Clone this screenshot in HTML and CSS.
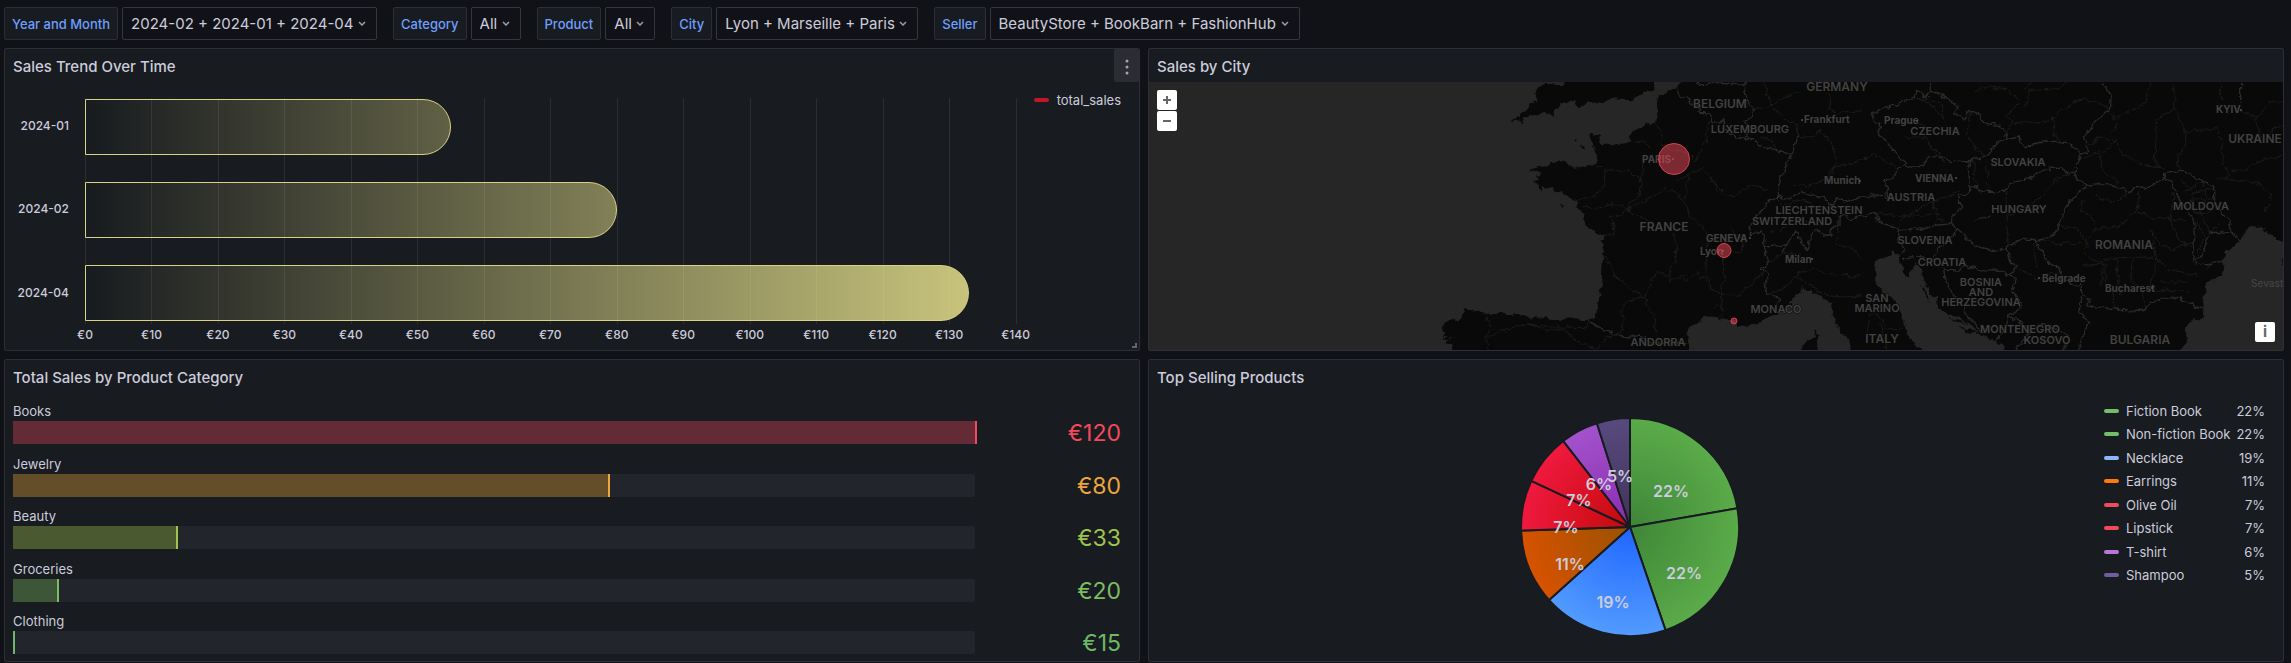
FILE: index.html
```
<!DOCTYPE html>
<html lang="en">
<head>
<meta charset="utf-8">
<title>Sales dashboard</title>
<link rel="stylesheet" href="styles.css">
</head>
<body>
<form class="filters">
  <div class="filter">
    <label class="filter-label" for="f-month">Year and Month</label>
    <span class="picker"><select id="f-month"><option>2024-02 + 2024-01 + 2024-04</option></select><svg class="chevron" viewBox="0 0 8 5"><path d="M1 1 4 4 7 1"/></svg></span>
  </div>
  <div class="filter">
    <label class="filter-label" for="f-category">Category</label>
    <span class="picker"><select id="f-category"><option>All</option></select><svg class="chevron" viewBox="0 0 8 5"><path d="M1 1 4 4 7 1"/></svg></span>
  </div>
  <div class="filter">
    <label class="filter-label" for="f-product">Product</label>
    <span class="picker"><select id="f-product"><option>All</option></select><svg class="chevron" viewBox="0 0 8 5"><path d="M1 1 4 4 7 1"/></svg></span>
  </div>
  <div class="filter">
    <label class="filter-label" for="f-city">City</label>
    <span class="picker"><select id="f-city"><option>Lyon + Marseille + Paris</option></select><svg class="chevron" viewBox="0 0 8 5"><path d="M1 1 4 4 7 1"/></svg></span>
  </div>
  <div class="filter">
    <label class="filter-label" for="f-seller">Seller</label>
    <span class="picker"><select id="f-seller"><option>BeautyStore + BookBarn + FashionHub</option></select><svg class="chevron" viewBox="0 0 8 5"><path d="M1 1 4 4 7 1"/></svg></span>
  </div>
</form>

<main class="dashboard">
  <section class="panel">
    <header class="panel-header">
      <h2>Sales Trend Over Time</h2>
      <button class="panel-menu" type="button" aria-label="Panel menu"><svg viewBox="0 0 4 16"><circle cx="2" cy="2" r="1.5"/><circle cx="2" cy="8" r="1.5"/><circle cx="2" cy="14" r="1.5"/></svg></button>
    </header>
    <div class="trend">
      <div class="trend-names"><span>2024-01</span><span>2024-02</span><span>2024-04</span></div>
      <div class="trend-plot">
        <div class="trend-grid"><i></i><i></i><i></i><i></i><i></i><i></i><i></i><i></i><i></i><i></i><i></i><i></i><i></i><i></i><i></i></div>
        <div class="trend-bars">
          <div class="trend-bar" style="--value: 55"></div>
          <div class="trend-bar" style="--value: 80"></div>
          <div class="trend-bar" style="--value: 133"></div>
        </div>
      </div>
      <div class="trend-legend"><span class="swatch red-dark"></span>total_sales</div>
      <div class="trend-axis"><span>€0</span><span>€10</span><span>€20</span><span>€30</span><span>€40</span><span>€50</span><span>€60</span><span>€70</span><span>€80</span><span>€90</span><span>€100</span><span>€110</span><span>€120</span><span>€130</span><span>€140</span></div>
    </div>
    <span class="resize-handle"></span>
  </section>

  <section class="panel">
    <header class="panel-header"><h2>Sales by City</h2></header>
    <div class="map">
      <svg class="map-canvas" viewBox="0 0 1134 268" preserveAspectRatio="xMinYMid slice">
        <defs>
          <filter id="rough" filterUnits="userSpaceOnUse" x="0" y="0" width="1134" height="268" color-interpolation-filters="sRGB">
            <feTurbulence type="fractalNoise" baseFrequency="0.14" numOctaves="3" seed="4"/>
            <feDisplacementMap in="SourceGraphic" scale="7" xChannelSelector="R" yChannelSelector="G"/>
          </filter>
        </defs>
        <g filter="url(#rough)">
        <g transform="translate(291 0) scale(.33333)">
          <g class="land">
            <path d="M738-20 712 16 690 26 668 34 656 44 654 60 655 92 652 106 640 120 620 128 596 136 575 150 566 168 575 178 560 186 530 190 508 186 486 184 478 172 480 156 462 158 446 154 450 172 458 182 456 194 464 204 466 222 470 240 462 252 446 250 430 254 414 256 404 258 394 252 386 246 378 238 368 236 362 242 350 240 340 242 328 246 318 250 304 252 292 256 274 262 278 272 298 270 304 276 288 280 296 288 300 294 278 296 290 304 298 314 304 326 308 314 322 316 338 322 350 328 366 334 378 342 392 348 404 352 414 360 418 374 410 378 424 388 434 396 428 408 438 422 446 436 458 446 476 452 492 460 488 474 476 474 490 490 484 500 492 512 488 540 486 580 484 600 478 640 472 680 464 702 450 716 430 714 410 710 392 706 376 712 368 718 340 712 310 708 286 706 270 706 246 698 220 696 190 696 160 696 130 694 112 686 90 684 76 682 64 694 66 704 60 708 40 712 20 720 8 732 4 744 16 748 8 762 22 762 14 774 30 772 22 786 38 786 34 830H755L745 780 742 758 752 738 775 720 800 700 822 704 840 708 855 712 880 712 893 728 915 734 940 730 960 722 980 708 1000 698 1030 686 1050 666 1066 636 1090 622 1112 628 1140 640 1170 664 1180 690 1184 716 1194 732 1198 752 1215 760 1228 780 1240 830H1451L1441 804 1411 770 1396 730 1381 690 1366 655 1336 635 1306 605 1302 590 1311 575 1300 545 1316 530 1346 520 1361 508 1376 518 1378 540 1388 565 1400 588 1412 575 1424 548 1436 548 1444 570 1454 600 1466 625 1488 650 1498 680 1526 696 1556 706 1586 722 1611 745 1631 762 1661 775 1681 790 1698 804 1710 830H2215L2221 804 2241 780 2238 740 2251 715 2286 708 2288 665 2296 630 2301 602 2326 592 2348 580 2352 555 2348 530 2356 510 2381 496 2396 480 2411 455 2421 440 2446 434 2481 436 2466 445 2491 458 2511 475 2560 480V-20Z"/>
            <path d="M305 8 340 10 370 8 384-20H644L640 22 618 30 600 42 570 52 545 50 520 48 495 58 480 66 464 58 450 60 435 66 420 74 400 60 380 58 360 66 345 80 338 102 325 98 312 92 290 94 270 96 255 110 245 124 235 116 214 116 226 106 240 102 254 90 266 76 280 64 290 50 284 30Z"/>
            <path d="M1126 740 1132 744 1132 770 1140 830H1076L1084 786 1104 774 1124 766ZM422 190 436 194 430 200ZM400 172 408 174 404 180ZM362 366 372 368 368 374ZM2522 534 2540 530V550L2526 546ZM1440 600 1455 640 1470 660 1458 628ZM1520 708 1560 716 1590 728 1560 724ZM1550 738 1590 742 1620 752 1590 752Z"/>
          </g>
          <path class="minor" d="M640 120 662 140 664 190 700 200 750 220 770 250M575 178 610 182 640 200M770 240 785 190 800 170 805 120M748 270 790 262 815 290 840 340M815 290 850 335 880 345 930 310 985 325M470 250 500 264 560 266 580 282 605 290 610 225M495 264 492 320 460 345 410 352M605 290 600 340 570 365 562 384M430 375 470 378 520 364 562 384 600 362 640 345 675 318 730 350M562 384 545 398 508 404 520 430 522 458 492 460M562 384 610 410 640 428M730 350 745 400 780 430 800 450 800 480M735 350 740 310 748 275 710 295M700 450 712 490 706 540 690 560 690 600 730 580 740 602 770 575 805 598M690 580 650 570 630 610 610 645 550 662 545 690 552 710 540 755M495 520 525 580 570 620 610 645 640 700 655 770 660 804M800 480 798 580 810 595 812 625 850 635 900 640 950 590 975 570M850 520 852 580 845 640 848 680 840 705M820 680 845 670M870 445 910 470 905 510 870 505M140 700 150 740 135 770 145 804M140 765 210 740 260 725 320 745 370 740 400 770 420 780 470 804M260 725 330 735 400 735 440 745 450 716M470 804 500 765 540 758M970 0 990 60 1030 110 1072 125 1072 160M940 80 985 75 1030 50 1075 30M1072 160 1110 165 1140 148 1175 180 1190 240 1170 290M1060 305 1100 312 1160 290 1180 255 1266 235M1165 30 1170 80 1200 95 1266 85M950 175 960 200M960 165 1000 180 1010 206M1010 350 1030 370 1080 355 1140 375M990 450 1040 440 1080 410 1140 430M985 540 1040 510 1080 520M985 635 1050 610 1060 580 1120 560 1180 580 1266 582M1060 580 1110 610 1160 640 1200 645 1266 642M1195 400 1195 490 1240 500 1266 530M1266 230 1300 218 1340 240 1376 260M1390 165 1460 165 1470 200 1500 215 1510 240M1430 45 1480 70 1515 115 1500 60 1430 45M1395 120 1460 130M1300 395 1370 400 1430 400 1500 395M1370 440 1400 400 1480 360 1560 330M1480 360 1490 400 1510 420M1590 90 1580 160 1620 210 1650 225M1600 30 1640 15 1700 20 1740 60 1700 100 1716 130 1690 165M1750 20 1780 0M1760 70 1770 25 1860 20 1880 0M1720 125 1840 115 1860 85 1930 50 2000 70 2020 110 2070 90 2120 60 2130 0M1840 100 1845 160 1860 180M1600 230 1610 320M1640 250 1645 320M1700 330 1704 490M1706 400 1800 350 1850 290 1900 270M1945 190 1980 165 2020 175 2050 220 2110 250 2170 262M1930 230 2000 205 2030 170M1980 220 1990 270 2030 290 2035 320M2200 0 2205 80 2150 110 2145 250 2175 262M2205 80 2235 150 2240 190 2215 220 2215 265M2235 150 2330 140 2345 180 2350 240 2370 280 2350 292 2325 290M2345 60 2340 0M2440 100 2470 180 2500 140 2532 130M2370 265 2410 265 2450 240 2532 220M2350 292 2450 300 2500 350 2470 390M2400 85 2450 110 2490 60 2532 60M1930 350 1920 385 1960 410 1975 440 1940 470 1935 520 1990 545 1985 610M1975 440 2040 430 2080 400 2090 385 2140 410 2200 410 2240 420M2090 385 2100 330M1960 340 2020 360 2060 340 2060 320M2130 440 2160 490 2200 500 2260 480M2150 530 2140 480M1990 535 2080 520 2150 530 2180 560 2270 580M2000 545 1995 600 2020 630 2020 680M2030 530 2040 640M2080 520 2075 600 2110 620 2110 685M2150 530 2130 620 2250 630M2160 600 2250 600M1930 550 2000 545M1740 560 1790 590 1850 570M1780 480 1790 560M1930 480 1850 485 1800 475M1860 430 1910 440 1930 470M2200 330 2190 410 2215 470 2260 500M2220 290 2260 330 2320 320M2260 330 2250 380 2300 400 2330 370M2230 330 2290 300 2300 350 2280 390 2310 450 2340 420M2270 410 2290 470 2270 520M2240 360 2320 350M1310 690 1340 740 1390 740M1280 760 1290 700 1310 690M1320 720 1340 804M1870 280 1850 300M2030 120 2010 160"/>
          <path class="border" d="M712 20 716 40 730 50 748 48 752 68 775 74 782 92 808 92 812 118 838 124 850 108 846 136 870 152 888 164 915 170 940 170 955 188 975 200 1010 206 1056 218M1072 160 1056 218 1034 260 1022 290 1014 345M920 0 912 30 925 60 940 80 938 104 918 120 930 140 915 170M770 0 800 8 830 2 870 6 915 10M1014 345 985 355 975 375 955 395 935 430 930 460 960 445 975 470 972 495 985 540 965 562 985 580 975 610 985 635 1020 648 1005 680M975 495 1010 492 1040 488 1030 510 1050 470 1068 448 1085 490 1105 500 1115 460 1130 440 1150 462 1172 462 1175 435 1200 430 1200 400 1235 412 1266 400M1014 345 1050 350 1080 328 1120 340 1150 350 1180 370 1190 345 1230 358 1266 345 1326 340 1341 355 1338 330 1346 315 1332 298 1371 275 1376 258 1396 240M1396 240 1396 252 1451 254 1466 218 1506 226 1536 238 1581 242 1596 232M1396 240 1366 215 1341 180 1314 150 1316 125 1294 98 1326 80 1366 70 1426 45 1426 28 1456 45 1471 30 1506 40 1536 60 1551 75 1546 95 1576 112 1584 85 1616 100 1641 125 1676 130 1696 150 1702 172M1469 0 1471 30M1702 172 1736 165 1758 195 1806 180 1856 182 1886 185 1928 212M1702 172 1666 185 1646 220 1596 232 1580 270 1591 310M1988 0 2014 45 2011 80 1966 120 1931 165 1944 215 1928 212 1901 270M1591 310 1636 328 1696 328 1706 305 1766 290 1811 260 1866 258 1876 272 1901 270 1916 295 1946 312M1946 312 1916 330 1886 365 1866 410 1841 460 1811 472 1746 472 1696 500 1666 508 1616 498 1566 455 1534 425M1591 310 1588 335 1556 340 1561 380 1536 400 1534 425M1266 400 1306 395 1316 420 1376 440 1436 445 1466 432 1534 425M1534 425 1551 440 1526 480 1496 498 1481 530 1441 520 1386 530M1376 440 1371 470 1391 500 1384 520M1511 560 1556 568 1566 550 1616 562 1676 565 1706 580 1731 555 1706 530 1701 495M1511 560 1516 600 1556 660 1596 720 1636 755M1706 580 1726 590 1716 630 1744 660 1731 690 1706 700 1696 740 1666 780M1786 475 1816 520 1826 545 1856 555 1866 590 1906 610 1921 600 1926 635 1951 655 1946 672 2006 678 2046 685 2096 688 2146 655 2206 646 2256 665 2286 680M1926 635 1916 690 1948 725 1921 770 1916 804M1946 312 1986 305 2046 320 2071 330 2081 318 2136 312 2171 285 2171 272 2226 265 2266 285 2321 312 2321 345 2346 395 2366 410 2376 450 2401 475M2171 285 2196 300 2216 350 2256 400 2266 440 2261 500 2266 540 2296 552 2326 538 2351 542M2266 530 2286 515 2311 450 2371 455M1706 700 1746 730 1776 740 1746 780 1726 804M1776 740 1816 725 1866 750 1886 770 1866 804M450 716 470 735 510 750 540 758 560 768 600 760 630 780 740 785M2402 0 2402 60M1604 420 1652 398"/>
        </g>
        </g>
        <g class="country large">
          <text x="688" y="9">GERMANY</text><text x="571" y="26">BELGIUM</text><text x="515" y="149">FRANCE</text><text x="733" y="261">ITALY</text><text x="975" y="167">ROMANIA</text><text x="991" y="262">BULGARIA</text><text x="1106" y="61">UKRAINE</text>
        </g>
        <g class="country">
          <text x="601" y="51">LUXEMBOURG</text><text x="670" y="132">LIECHTENSTEIN</text><text x="643" y="143">SWITZERLAND</text><text x="627" y="231">MONACO</text><text x="509" y="264">ANDORRA</text><text x="786" y="53">CZECHIA</text><text x="762" y="119">AUSTRIA</text><text x="869" y="84">SLOVAKIA</text><text x="870" y="131">HUNGARY</text><text x="776" y="162">SLOVENIA</text><text x="793" y="184">CROATIA</text><text x="832" y="204">BOSNIA</text><text x="832" y="214">AND</text><text x="832" y="224">HERZEGOVINA</text><text x="871" y="251">MONTENEGRO</text><text x="898" y="262">KOSOVO</text><text x="728" y="220">SAN</text><text x="728" y="230">MARINO</text><text x="1052" y="128">MOLDOVA</text>
        </g>
        <g class="city">
          <text x="493" y="81">PARIS</text><text x="557" y="160">GENEVA</text><text x="551" y="173">Lyon</text><text x="655" y="41">Frankfurt</text><text x="675" y="102">Munich</text><text x="636" y="181">Milan</text><text x="735" y="42">Prague</text><text x="766" y="100">VIENNA</text><text x="893" y="200">Belgrade</text><text x="956" y="210">Bucharest</text><text x="1067" y="31">KYIV</text><text class="faint" x="1102" y="205">Sevasto</text>
          <circle cx="524" cy="77" r="1"/><circle cx="601" cy="156" r="1"/><circle cx="574" cy="169" r="1"/><circle cx="653" cy="38" r="1"/><circle cx="711" cy="99" r="1"/><circle cx="663" cy="177" r="1"/><circle cx="768" cy="39" r="1"/><circle cx="807" cy="96" r="1"/><circle cx="890" cy="196" r="1"/><circle cx="1003" cy="206" r="1"/><circle cx="1092" cy="28" r="1"/>
        </g>
        <g class="sale"><circle cx="525" cy="77" r="15.5"/><circle cx="575" cy="168.500" r="7"/><circle cx="585" cy="239" r="3"/></g>
      </svg>
      <div class="map-zoom"><button type="button" aria-label="Zoom in"><svg viewBox="0 0 8 8"><path d="M4 0V8M0 4H8"/></svg></button><button type="button" aria-label="Zoom out"><svg viewBox="0 0 8 8"><path d="M0 4H8"/></svg></button></div>
      <button class="map-info" type="button" aria-label="Attributions">i</button>
    </div>
  </section>

  <section class="panel">
    <header class="panel-header"><h2>Total Sales by Product Category</h2></header>
    <div class="gauges">
      <div class="gauge red"><span class="gauge-name">Books</span><div class="gauge-track"><div class="gauge-fill" style="width: 100%"></div></div><span class="gauge-value">€120</span></div>
      <div class="gauge amber"><span class="gauge-name">Jewelry</span><div class="gauge-track"><div class="gauge-fill" style="width: 61.9%"></div></div><span class="gauge-value">€80</span></div>
      <div class="gauge lime"><span class="gauge-name">Beauty</span><div class="gauge-track"><div class="gauge-fill" style="width: 16.9%"></div></div><span class="gauge-value">€33</span></div>
      <div class="gauge leaf"><span class="gauge-name">Groceries</span><div class="gauge-track"><div class="gauge-fill" style="width: 4.6%"></div></div><span class="gauge-value">€20</span></div>
      <div class="gauge green"><span class="gauge-name">Clothing</span><div class="gauge-track"><div class="gauge-fill" style="width: 0%"></div></div><span class="gauge-value">€15</span></div>
    </div>
  </section>

  <section class="panel">
    <header class="panel-header"><h2>Top Selling Products</h2></header>
    <div class="products">
      <div class="pie-area">
        <svg class="pie" viewBox="-109 -109 218 218">
          <defs>
            <radialGradient id="g-green" gradientUnits="userSpaceOnUse" cx="0" cy="0" r="109"><stop offset="0" stop-color="#3f8638"/><stop offset="1" stop-color="#5aab49"/></radialGradient>
            <radialGradient id="g-blue" gradientUnits="userSpaceOnUse" cx="0" cy="0" r="109"><stop offset="0" stop-color="#1f66ff"/><stop offset="1" stop-color="#529bff"/></radialGradient>
            <radialGradient id="g-orange" gradientUnits="userSpaceOnUse" cx="0" cy="0" r="109"><stop offset="0" stop-color="#995200"/><stop offset="1" stop-color="#d65200"/></radialGradient>
            <radialGradient id="g-red" gradientUnits="userSpaceOnUse" cx="0" cy="0" r="109"><stop offset="0" stop-color="#c20a0a"/><stop offset="1" stop-color="#f0193f"/></radialGradient>
            <radialGradient id="g-purple" gradientUnits="userSpaceOnUse" cx="0" cy="0" r="109"><stop offset="0" stop-color="#8a2bb0"/><stop offset="1" stop-color="#a352cc"/></radialGradient>
            <radialGradient id="g-violet" gradientUnits="userSpaceOnUse" cx="0" cy="0" r="109"><stop offset="0" stop-color="#40345a"/><stop offset="1" stop-color="#574a7e"/></radialGradient>
          </defs>
          <g class="slices">
            <path fill="url(#g-green)" d="M0 0V-109A109 109 0 0 1 107.400-18.700Z"/>
            <path fill="url(#g-green)" d="M0 0 107.400-18.700A109 109 0 0 1 35.500 103.100Z"/>
            <path fill="url(#g-blue)" d="M0 0 35.500 103.100A109 109 0 0 1-80.900 73.100Z"/>
            <path fill="url(#g-orange)" d="M0 0-80.900 73.100A109 109 0 0 1-108.900 3.600Z"/>
            <path fill="url(#g-red)" d="M0 0-108.900 3.600A109 109 0 0 1-98.700-46.200Z"/>
            <path fill="url(#g-red)" d="M0 0-98.700-46.200A109 109 0 0 1-66.800-86.100Z"/>
            <path fill="url(#g-purple)" d="M0 0-66.800-86.100A109 109 0 0 1-33.100-103.800Z"/>
            <path fill="url(#g-violet)" d="M0 0-33.100-103.800A109 109 0 0 1 0-109Z"/>
          </g>
          <g class="slice-labels">
            <text x="41" y="-30">22%</text><text x="54" y="52">22%</text><text x="-17" y="81">19%</text><text x="-60" y="43">11%</text><text x="-64" y="6">7%</text><text x="-51" y="-21">7%</text><text x="-31" y="-37">6%</text><text x="-10" y="-45">5%</text>
          </g>
        </svg>
      </div>
      <table class="products-legend">
        <tr><td><span class="swatch s-green"></span></td><th scope="row">Fiction Book</th><td>22%</td></tr>
        <tr><td><span class="swatch s-green"></span></td><th scope="row">Non-fiction Book</th><td>22%</td></tr>
        <tr><td><span class="swatch s-blue"></span></td><th scope="row">Necklace</th><td>19%</td></tr>
        <tr><td><span class="swatch s-orange"></span></td><th scope="row">Earrings</th><td>11%</td></tr>
        <tr><td><span class="swatch s-red"></span></td><th scope="row">Olive Oil</th><td>7%</td></tr>
        <tr><td><span class="swatch s-red"></span></td><th scope="row">Lipstick</th><td>7%</td></tr>
        <tr><td><span class="swatch s-purple"></span></td><th scope="row">T-shirt</th><td>6%</td></tr>
        <tr><td><span class="swatch s-violet"></span></td><th scope="row">Shampoo</th><td>5%</td></tr>
      </table>
    </div>
  </section>
</main>
</body>
</html>
```
FILE: styles.css
```
* { box-sizing: border-box; }

body {
  margin: 0;
  min-height: 100vh;
  display: flex;
  flex-direction: column;
  background: #111217;
  color: #ccccdc;
  font-family: Inter, "Liberation Sans", sans-serif;
  font-size: 13px;
  line-height: 20px;
}

button { font: inherit; border: 0; padding: 0; cursor: pointer; }

/* Filters */
.filters { display: flex; flex-wrap: wrap; gap: 8px 16px; padding: 7px 4px 8px; }
.filter { display: flex; gap: 4px; }
.filter-label {
  height: 33px;
  display: flex;
  align-items: center;
  padding: 0 7px;
  border: 1px solid #2b2e34;
  border-radius: 2px;
  background: #181b1f;
  color: #6e9fff;
  font-weight: 500;
}
.picker { display: grid; align-items: center; }
.picker > * { grid-area: 1 / 1; }
.picker select {
  appearance: none;
  height: 33px;
  margin: 0;
  padding: 0 22px 0 8px;
  border: 1px solid #34363d;
  border-radius: 2px;
  background: #111217;
  color: #ccccdc;
  font: 15px Inter, "Liberation Sans", sans-serif;
}
.chevron {
  justify-self: end;
  width: 8px;
  height: 5px;
  margin-right: 11px;
  fill: none;
  stroke: #9c9ca8;
  stroke-width: 1.5;
  pointer-events: none;
}

/* Panels */
.dashboard {
  flex: 1;
  display: grid;
  grid-template-columns: minmax(0, 1fr) minmax(0, 1fr);
  grid-auto-rows: 1fr;
  gap: 8px;
  padding: 0 7px 1px 4px;
}
.panel {
  position: relative;
  display: flex;
  flex-direction: column;
  overflow: hidden;
  border: 1px solid #2c2f35;
  border-radius: 2px;
  background: #181b1f;
}
.panel-header { display: flex; justify-content: space-between; height: 33px; padding-left: 8px; }
.panel-header h2 { margin: 0; padding-top: 1px; font-size: 15px; font-weight: 500; line-height: 33px; }
.panel-menu { width: 25px; background: #2b2d32; border-radius: 2px; }
.panel-menu svg { width: 4px; height: 16px; fill: #a4a4b0; vertical-align: middle; }
.resize-handle {
  position: absolute;
  right: 2px;
  bottom: 2px;
  width: 5px;
  height: 5px;
  border: solid #62646b;
  border-width: 0 2px 2px 0;
}
.swatch { display: inline-block; width: 15px; height: 4px; border-radius: 2px; }
.red-dark { background: #c4162a; }

/* Sales trend */
.trend {
  flex: 1;
  display: grid;
  grid-template-columns: 80px minmax(0, 1fr) auto;
  grid-template-rows: minmax(0, 1fr) 26px;
  padding: 8px 18px 0 0;
}
.trend-names {
  display: flex;
  flex-direction: column;
  gap: 27px;
  padding: 8px 16px 3px 0;
  font-size: 12px;
  font-weight: 500;
}
.trend-names span { flex: 1; display: flex; align-items: center; justify-content: flex-end; }
.trend-plot { display: grid; padding-top: 8px; }
.trend-plot > * { grid-area: 1 / 1; }
.trend-grid { display: flex; justify-content: space-between; margin-right: -1px; }
.trend-grid i { width: 1px; background: #2a2d31; }
.trend-bars { display: flex; flex-direction: column; gap: 27px; padding: 1px 0 3px; }
.trend-bar {
  flex: 1;
  width: calc(100% * var(--value) / 140);
  border: 1px solid #d8d284;
  border-radius: 0 28px 28px 0;
  background: linear-gradient(90deg, rgba(255, 248, 153, 0), rgba(255, 248, 153, .76)) 0 0 / calc(100% * 133 / var(--value)) 100% no-repeat;
}
.trend-legend { display: flex; align-items: center; gap: 8px; height: 20px; margin-left: 18px; }
.trend-axis {
  grid-column: 2;
  display: flex;
  justify-content: space-between;
  font-size: 12px;
  font-weight: 500;
  line-height: 22px;
}
.trend-axis span { width: 0; display: flex; justify-content: center; white-space: nowrap; }

/* Map */
.map { flex: 1; display: grid; background: #262626; }
.map > * { grid-area: 1 / 1; }
.map-canvas { display: block; width: 100%; height: 100%; min-height: 0; }
.land { fill: #090909; }
.minor, .border { fill: none; stroke-linejoin: round; }
.minor { stroke: #1b1b1b; stroke-width: 3; }
.border { stroke: #2b2b2b; stroke-width: 4; }
.country, .city { fill: #424242; stroke: #090909; stroke-width: 1; paint-order: stroke; }
.country { font-size: 11px; font-weight: 600; text-anchor: middle; }
.country.large { font-size: 12px; }
.city { font-size: 10px; font-weight: 700; }
.city circle { stroke: none; fill: #555; }
.city .faint { font-weight: 500; stroke: none; }
.sale { fill: rgba(242, 73, 92, .5); stroke: #d63f52; stroke-width: 1; }
.map-zoom { align-self: start; justify-self: start; display: grid; gap: 1px; margin: 8px; z-index: 1; }
.map-zoom button, .map-info { width: 20px; height: 20px; border-radius: 2px; background: #fff; color: #666; }
.map-zoom svg { display: block; width: 8px; height: 8px; margin: auto; stroke: #666; stroke-width: 2; }
.map-info { align-self: end; justify-self: end; margin: 8px; font-size: 15px; font-weight: 700; line-height: 20px; z-index: 1; }

/* Category gauges */
.gauges { flex: 1; display: flex; flex-direction: column; justify-content: space-between; padding: 8px 18px 7px 8px; }
.gauge { display: grid; grid-template-columns: minmax(0, 1fr) 146px; grid-template-rows: 20px 23px; }
.gauge-name { grid-column: 1 / -1; }
.gauge-track { border-radius: 2px; background: #22252b; }
.gauge-fill { box-sizing: content-box; height: 100%; border-right: 2px solid var(--tone); background: var(--fill); }
.gauge-value { color: var(--tone); font-size: 23px; line-height: 24px; text-align: right; }
.red { --tone: #f2495c; --fill: #642b36; }
.amber { --tone: #eda53d; --fill: #634e29; }
.lime { --tone: #9dc44d; --fill: #4a592f; }
.leaf { --tone: #7dbc62; --fill: #3d5637; }
.green { --tone: #6cb866; --fill: #38553a; }

/* Products */
.products { flex: 1; display: flex; padding: 6px 18px 6px 8px; }
.pie-area { flex: 1; display: grid; place-items: center; }
.pie { display: block; width: 218px; height: 218px; overflow: visible; }
.slices { stroke: #181b1f; stroke-width: 2; stroke-linejoin: round; }
.slice-labels { fill: #ccccdc; font-size: 16px; font-weight: 600; text-anchor: middle; }
.products-legend { align-self: flex-start; height: 188px; border-collapse: collapse; }
.products-legend td, .products-legend th { padding: 0; font-weight: 400; text-align: left; }
.products-legend th { padding: 0 6px 0 7px; }
.products-legend td:last-child { text-align: right; }
.products-legend .swatch { display: block; }
.s-green { background: #73bf69; }
.s-blue { background: #8ab8ff; }
.s-orange { background: #ff780a; }
.s-red { background: #f2495c; }
.s-purple { background: #b877d9; }
.s-violet { background: #705da0; }
```
